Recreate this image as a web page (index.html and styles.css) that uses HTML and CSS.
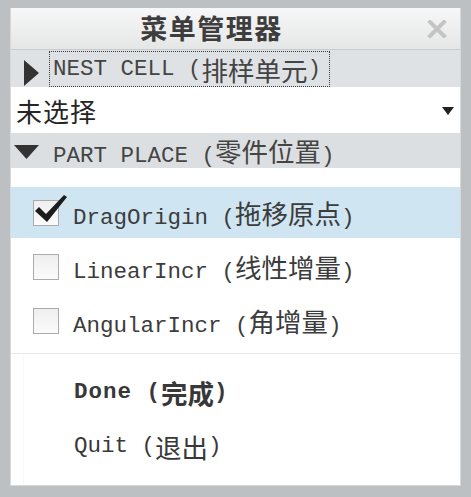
FILE: index.html
```html
<!DOCTYPE html>
<html lang="zh">
<head>
<meta charset="utf-8">
<title>菜单管理器</title>
<link rel="stylesheet" href="styles.css">
</head>
<body>
<div class="panel">
  <div class="titlebar">
    <div class="title">菜单管理器</div>
    <svg class="close" width="20" height="18" viewBox="0 0 20 18"><path d="M3 2 L17 16 M17 2 L3 16" stroke="#c4c4c4" stroke-width="4" stroke-linecap="square"/></svg>
  </div>
  <div class="section-row nest">
    <svg class="tri-right" width="15" height="26" viewBox="0 0 15 26"><path d="M0 0 L15 13 L0 26 Z" fill="#333"/></svg>
    <div class="focus mono">NEST CELL (<span class="cjk">排样单元</span>)</div>
  </div>
  <div class="dropdown">
    <span class="dd-text">未选择</span>
    <svg width="12" height="8" viewBox="0 0 12 8"><path d="M0 0 L12 0 L6 8 Z" fill="#222"/></svg>
  </div>
  <div class="section-row part">
    <svg class="tri-down" width="25" height="14" viewBox="0 0 25 14"><path d="M0 0 L25 0 L12.5 14 Z" fill="#333"/></svg>
    <div class="label mono">PART PLACE (<span class="cjk">零件位置</span>)</div>
  </div>
  <div class="list">
    <div class="item selected">
      <span class="box"><svg class="check" width="25" height="25" viewBox="0 0 25 25"><path d="M2 11 L6 7 L13 14 L31 -5 L34 -3 L14 22 Z" fill="#1c1c1c"/></svg></span>
      <span class="mono">DragOrigin (<span class="cjk">拖移原点</span>)</span>
    </div>
    <div class="item">
      <span class="box"></span>
      <span class="mono">LinearIncr (<span class="cjk">线性增量</span>)</span>
    </div>
    <div class="item">
      <span class="box"></span>
      <span class="mono">AngularIncr (<span class="cjk">角增量</span>)</span>
    </div>
  </div>
  <div class="actions">
    <div class="action done mono">Done (<span class="cjk">完成</span>)</div>
    <div class="action mono">Quit (<span class="cjk">退出</span>)</div>
  </div>
</div>
</body>
</html>
```
FILE: styles.css
```css
html, body {
  margin: 0;
  padding: 0;
}
body {
  background: #bdc0c2;
  padding: 8px 10px 11px 10px;
  height: 497px;
  box-sizing: border-box;
  font-family: "Liberation Mono", "Noto Sans CJK SC", monospace;
  color: #3a3a3a;
}
.panel {
  background: #fff;
  height: 478px;
  box-sizing: border-box;
  border: 1px solid #d6d8da;
  border-top: none;
  display: flex;
  flex-direction: column;
}
.mono {
  font-family: "Liberation Mono", "Noto Sans CJK SC", monospace;
  font-size: 22.5px;
  white-space: pre;
}
.cjk {
  font-family: "Noto Sans CJK SC", sans-serif;
  font-size: 26.5px;
}
.titlebar {
  height: 42px;
  box-sizing: border-box;
  background: linear-gradient(#f7f7f7, #e5e6e6);
  border-bottom: 1px solid #c9cbcd;
  display: grid;
  grid-template-columns: 1fr 20px;
  column-gap: 15px;
  padding-right: 13px;
  align-items: center;
}
.title {
  text-align: center;
  font-family: "Noto Sans CJK SC", sans-serif;
  font-weight: 700;
  font-size: 27px;
  letter-spacing: 1.5px;
  color: #3d3d3d;
  line-height: 1;
  padding-bottom: 2px;
}
.close { display: block; }
.section-row {
  display: flex;
  align-items: center;
  box-sizing: border-box;
}
.nest {
  height: 37px;
  background: #dfe2e4;
  padding-left: 13px;
}
.tri-right {
  display: block;
  margin-top: 9px;
  margin-right: 10px;
}
.focus {
  height: 36px;
  box-sizing: border-box;
  border: 1px dotted #3a3a3a;
  margin-top: 1px;
  padding: 0 4px 0 3px;
  display: flex;
  align-items: center;
  color: #444;
  width: 281px;
}
.dropdown {
  height: 46px;
  display: flex;
  align-items: center;
  justify-content: space-between;
  padding: 0 6px 0 5px;
  background: #fff;
}
.dd-text {
  font-family: "Noto Sans CJK SC", sans-serif;
  font-size: 26px;
  color: #262626;
  letter-spacing: 1px;
}
.dropdown svg { display: block; margin-top: 2px; }
.part {
  height: 35px;
  background: #dcdfe1;
  padding-left: 3px;
}
.tri-down {
  display: block;
  margin-right: 14px;
  margin-top: 2px;
}
.label { color: #444; }
.list {
  padding: 19px 0 0 0;
  display: flex;
  flex-direction: column;
  gap: 3px;
  border-bottom: 1px solid #e6e8e9;
  padding-bottom: 7px;
}
.item {
  height: 51px;
  display: flex;
  align-items: center;
  padding-left: 22px;
  gap: 14px;
  color: #3c3c3c;
}
.item.selected { background: #cfe5f1; }
.box {
  width: 26px;
  height: 26px;
  box-sizing: border-box;
  border: 1px solid #a9abad;
  background: linear-gradient(#efefef, #fbfbfb);
  flex: none;
}
.check {
  display: block;
  overflow: visible;
  margin: -1px;
}
.actions {
  flex: 1;
  margin-left: 12px;
  border-left: 1px solid #f7f8f8;
  padding-top: 20px;
  display: flex;
  flex-direction: column;
  gap: 18px;
}
.action {
  height: 36px;
  display: flex;
  align-items: center;
  padding-left: 50px;
  color: #383838;
}
.done {
  font-weight: 700;
  letter-spacing: 1px;
}
.done .cjk { letter-spacing: 0; }
```
